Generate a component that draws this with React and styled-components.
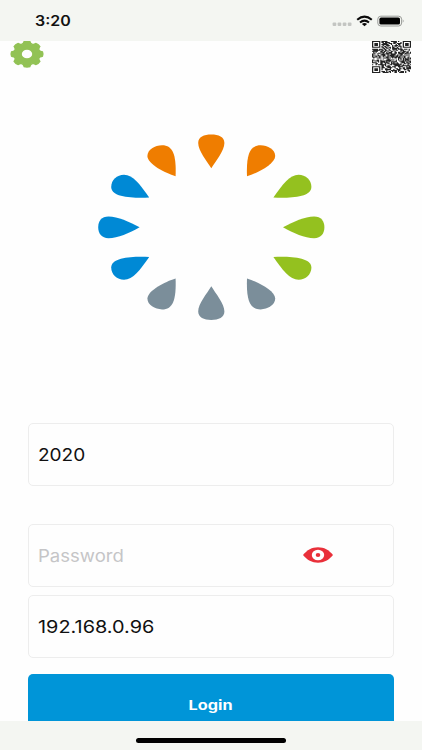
import React from "react";
import styled, { createGlobalStyle } from "styled-components";

const GlobalStyle = createGlobalStyle`
  * { box-sizing: border-box; }
  html, body { margin: 0; padding: 0; background: #fefefe; }
  body { font-family: Inter, "Liberation Sans", sans-serif; overflow: hidden; }
`;

const Screen = styled.div`
  width: 422px;
  height: 750px;
  display: flex;
  flex-direction: column;
  overflow: hidden;
  background: #fefefe;
`;

const StatusBar = styled.header`
  flex: none;
  height: 41px;
  padding: 0 17px 0 35px;
  display: flex;
  justify-content: space-between;
  background: #f4f6f2;
`;

const Clock = styled.span`
  margin-top: 12px;
  height: 18px;
  line-height: 18px;
  font-size: 14px;
  font-weight: 600;
  color: #111;
  transform: scaleX(1.14);
  transform-origin: left center;
`;

const StatusIcons = styled.svg`
  width: 74px;
  height: 41px;
`;

const Content = styled.main`
  flex: 1;
  min-height: 0;
  overflow: hidden;
  display: flex;
  flex-direction: column;
`;

const Toolbar = styled.div`
  flex: none;
  height: 33px;
  padding: 0 11px 0 10px;
  display: flex;
  justify-content: space-between;
`;

const Gear = styled.svg`
  width: 34px;
  height: 28px;
  margin-top: -1px;
  overflow: visible;
`;

const QrCode = styled.svg`
  width: 39px;
  height: 32px;
`;

const Logo = styled.svg`
  flex: none;
  width: 228px;
  height: 188px;
  margin: 59px 0 0 97px;
`;

const Form = styled.form`
  display: flex;
  flex-direction: column;
  margin: 102px 28px 0;
`;

const Field = styled.label`
  flex: none;
  height: 63px;
  margin-top: ${(p) => p.$gap}px;
  padding: 0 60px 0 10px;
  display: flex;
  align-items: center;
  border: 1px solid #ededed;
  border-radius: 5px;
`;

const Input = styled.input`
  width: 200px;
  margin-left: -1px;
  padding: 0;
  border: 0;
  outline: 0;
  background: transparent;
  font: 400 17px/24px Inter, sans-serif;
  color: #111;
  transform: scaleX(${(p) => p.$stretch});
  transform-origin: left center;
  &::placeholder { color: #c5c5c7; opacity: 1; }
`;

const Eye = styled.svg`
  width: 30px;
  height: 16px;
  margin: -2px 0 0 auto;
`;

const LoginButton = styled.button`
  height: 62px;
  margin: 16px 0 0;
  padding: 0;
  border: 0;
  border-radius: 5px;
  background: #0095d8;
  color: #fff;
  font: 700 13px/20px Inter, sans-serif;
`;

const ButtonLabel = styled.span`
  display: inline-block;
  transform: scaleX(1.25);
`;

const HomeBar = styled.footer`
  flex: none;
  height: 29px;
  display: flex;
  justify-content: center;
  padding-top: 17px;
  background: #f4f6f2;
`;

const HomeIndicator = styled.div`
  width: 150px;
  height: 5px;
  border-radius: 3px;
  background: #000;
`;

const QR_SIZE = 33;

const inFinder = (x, y) => {
  const corners = [[0, 0], [QR_SIZE - 7, 0], [0, QR_SIZE - 7]];
  for (const [cx, cy] of corners) {
    const dx = x - cx;
    const dy = y - cy;
    if (dx >= -1 && dx <= 7 && dy >= -1 && dy <= 7) {
      const r = Math.max(Math.abs(dx - 3), Math.abs(dy - 3));
      return r === 3 || r <= 1 ? 1 : 0;
    }
  }
  return -1;
};

const buildQrPath = () => {
  let seed = 20209;
  let d = "";
  for (let y = 0; y < QR_SIZE; y++) {
    for (let x = 0; x < QR_SIZE; x++) {
      seed ^= seed << 13;
      seed ^= seed >>> 17;
      seed ^= seed << 5;
      const finder = inFinder(x, y);
      const dark = finder >= 0 ? finder === 1 : (seed >>> 0) / 4294967296 < 0.58;
      if (dark) d += `M${x} ${y}h1.05v1.05h-1.05z`;
    }
  }
  return d;
};

const qrPath = buildQrPath();

const TOP = "M211.3 168.3C207 161 198.2 151 198.2 143C198.2 137 204 134.6 211.3 134.6C218.6 134.6 224.4 137 224.4 143C224.4 151 215.6 161 211.3 168.3Z";
const STEEP = "M175.6 176.2C165 173 147.4 164 147.4 156C147.4 149.5 155 145.2 162 145.2C173 145.2 176.4 155 175.6 176.2Z";
const SHALLOW = "M149.2 197.6C135 198.2 111.2 198 111.2 187C111.2 180 117 174.8 124 174.8C133 174.8 140 184.5 149.2 197.6Z";
const SIDE = "M139.6 227.3C129 221.5 118 216.4 108.5 216.4C101.5 216.4 98.2 221 98.2 227.3C98.2 233.6 101.5 238.2 108.5 238.2C118 238.2 129 233.1 139.6 227.3Z";

const MIRROR_X = "translate(422.6 0) scale(-1 1)";
const MIRROR_Y = "translate(0 454.6) scale(1 -1)";
const MIRROR_XY = "translate(422.6 454.6) scale(-1 -1)";

const petals = [
  { d: TOP, fill: "#ef7d00" },
  { d: STEEP, fill: "#ef7d00" },
  { d: STEEP, fill: "#ef7d00", transform: MIRROR_X },
  { d: SHALLOW, fill: "#0089d5" },
  { d: SIDE, fill: "#0089d5" },
  { d: SHALLOW, fill: "#0089d5", transform: MIRROR_Y },
  { d: SHALLOW, fill: "#94c11f", transform: MIRROR_X },
  { d: SIDE, fill: "#94c11f", transform: MIRROR_X },
  { d: SHALLOW, fill: "#94c11f", transform: MIRROR_XY },
  { d: STEEP, fill: "#7b8e9a", transform: MIRROR_Y },
  { d: TOP, fill: "#7b8e9a", transform: MIRROR_Y },
  { d: STEEP, fill: "#7b8e9a", transform: MIRROR_XY },
];

const teeth = [0, 45, 90, 135, 180, 225, 270, 315];

export default function App() {
  return (
    <>
      <GlobalStyle />
      <Screen>
        <StatusBar>
          <Clock>3:20</Clock>
          <StatusIcons viewBox="331 0 74 41" aria-hidden="true">
            <g fill="#c3c5c2">
              <rect x="332.6" y="22.5" width="3.7" height="3.4" rx="1" />
              <rect x="337.6" y="22.5" width="3.7" height="3.4" rx="1" />
              <rect x="342.7" y="22.5" width="3.7" height="3.4" rx="1" />
              <rect x="347.8" y="22.5" width="3.7" height="3.4" rx="1" />
            </g>
            <g fill="none" stroke="#0a0a0a" strokeWidth="2.1">
              <path d="M357.2 19.7Q364.5 13.700 371.800 19.7" />
              <path d="M360 22.500Q364.500 18.900 369 22.500" />
            </g>
            <path d="M361.9 23.9Q364.5 22 367.1 23.9L364.5 26.2Z" fill="#0a0a0a" />
            <rect x="377.8" y="16.2" width="23.8" height="9.8" rx="3" fill="none" stroke="#999b98" />
            <rect x="379.4" y="17.6" width="20.6" height="7" rx="1.6" fill="#000" />
            <path d="M402.8 19.3Q404.5 21 402.8 22.8Z" fill="#888" />
          </StatusIcons>
        </StatusBar>
        <Content>
          <Toolbar>
            <Gear viewBox="-17 -17 34 34" preserveAspectRatio="none" aria-label="Settings">
              <g fill="#92c255">
                {teeth.map((a) => (
                  <path key={a} d="M-6.8 -11.5C-4.2 -12.500 -4 -14 -3.300 -16Q0 -17.200 3.300 -16C4 -14 4.200 -12.500 6.800 -11.500Z" transform={`rotate(${a})`} />
                ))}
                <path fillRule="evenodd" d="M0 -12.8A12.8 12.8 0 1 1 0 12.8A12.8 12.8 0 1 1 0 -12.8ZM0 -5.2A5.2 5.2 0 1 0 0 5.2A5.2 5.2 0 1 0 0 -5.2Z" />
              </g>
            </Gear>
            <QrCode viewBox={`0 0 ${QR_SIZE} ${QR_SIZE}`} preserveAspectRatio="none" aria-label="QR code">
              <path d={qrPath} fill="#222" />
            </QrCode>
          </Toolbar>
          <Logo viewBox="97 133 228 188" aria-hidden="true">
            {petals.map((petal, i) => (
              <path key={i} {...petal} />
            ))}
          </Logo>
          <Form>
            <Field $gap={0}>
              <Input $stretch={1.12} defaultValue="2020" aria-label="User" />
            </Field>
            <Field $gap={38}>
              <Input $stretch={1.09} placeholder="Password" type="password" />
              <Eye viewBox="0 0 30 16" aria-hidden="true">
                <path d="M0 8C4 3 9 0.3 15 0.3S26 3 30 8C26 13 21 15.7 15 15.7S4 13 0 8Z" fill="#e9303a" />
                <ellipse cx="15" cy="8" rx="6.2" ry="5.2" fill="#fff" />
                <ellipse cx="15" cy="8" rx="2.3" ry="1.9" fill="#e9303a" />
              </Eye>
            </Field>
            <Field $gap={8}>
              <Input $stretch={1.17} defaultValue="192.168.0.96" aria-label="Server" />
            </Field>
            <LoginButton type="button">
              <ButtonLabel>Login</ButtonLabel>
            </LoginButton>
          </Form>
        </Content>
        <HomeBar>
          <HomeIndicator />
        </HomeBar>
      </Screen>
    </>
  );
}
